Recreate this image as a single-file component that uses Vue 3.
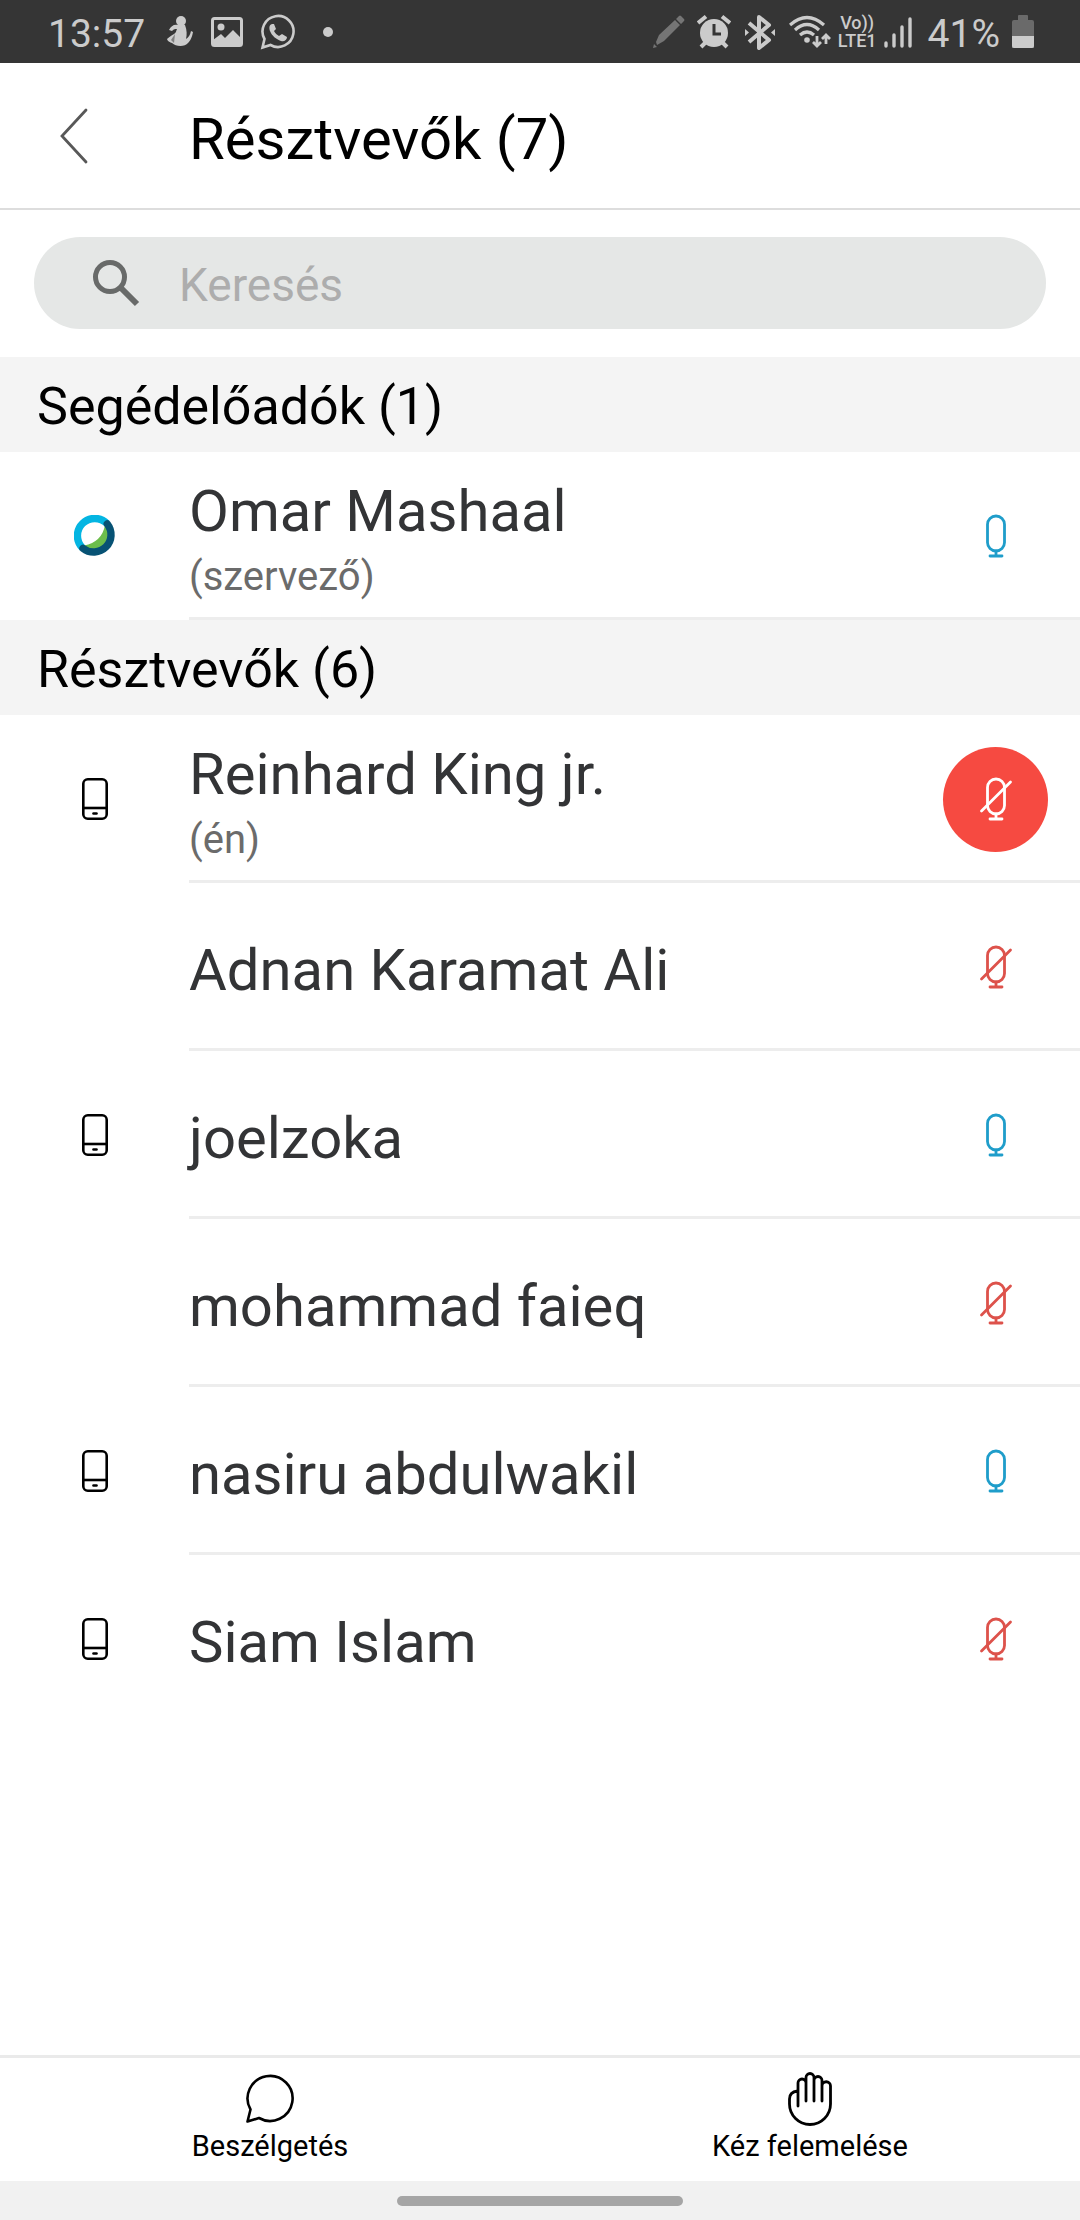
<script setup>
import { ref } from 'vue'

const query = ref('')

const groups = [
  {
    title: 'Segédelőadók (1)',
    people: [{ name: 'Omar Mashaal', role: '(szervező)', device: 'webex', mic: 'on' }],
  },
  {
    title: 'Résztvevők (6)',
    people: [
      { name: 'Reinhard King jr.', role: '(én)', device: 'phone', mic: 'self' },
      { name: 'Adnan Karamat Ali', device: '', mic: 'off' },
      { name: 'joelzoka', device: 'phone', mic: 'on' },
      { name: 'mohammad faieq', device: '', mic: 'off' },
      { name: 'nasiru abdulwakil', device: 'phone', mic: 'on' },
      { name: 'Siam Islam', device: 'phone', mic: 'off' },
    ],
  },
]
</script>

<template>
  <div class="screen">
    <div class="status">
      <div class="status-side left">
        <span class="clock">13:57</span>
        <svg width="28" height="36" viewBox="0 0 28 36" fill="#cbcbcb">
          <circle cx="15" cy="7" r="5" />
          <path d="M12 11c-4-1-7 1-9 5l3 1c2-2 3-2 5-2-1 2-1 4-3 5-3 2-5 3-7 5 1 3 3 3 5 4 4 4 13 4 16 0 2-2 4-5 5-11l-2-1c-1 4-2 6-5 8 1-4 1-9-1-14z" />
          <path d="M9 20l-4 6 3 3z" fill="#353535" opacity=".5" />
        </svg>
        <svg width="32" height="36" viewBox="0 0 32 36">
          <rect x="1.500" y="4.500" width="29" height="27" rx="2" fill="none" stroke="#cbcbcb" stroke-width="3" />
          <circle cx="10" cy="13" r="3.500" fill="#cbcbcb" />
          <path d="M2 26l8-6 4 4 8-8 9 9v7H2z" fill="#cbcbcb" />
        </svg>
        <svg width="36" height="36" viewBox="0 0 36 36">
          <path d="M2.500 33.500l2-8.500a15.500 15.500 0 1 1 6 6z" fill="none" stroke="#cbcbcb" stroke-width="2.600" />
          <path d="M12 10c-3 1-3 4-2 7 2 5 6 8 11 10 3 1 6-1 6-4l-5-3-3 2c-2-1-4-3-5-5l2-2-2-5z" fill="#cbcbcb" />
        </svg>
        <span class="dot"></span>
      </div>
      <div class="status-side right">
        <svg width="32" height="36" viewBox="0 0 32 36" fill="#757575">
          <path d="M0 34l1-4 3 3zM3 28l3-7L22 6l5 5-16 16-7 4zM23 5l3-3q1-1 2 0l3 3q1 1 0 2l-3 3z" />
        </svg>
        <svg width="34" height="36" viewBox="0 0 34 36">
          <g fill="none" stroke="#cbcbcb" stroke-width="4">
            <path d="M1 9l8-6.500M25 2.500L33 9M8 29l-4 4M26 29l4 4" />
          </g>
          <circle cx="17" cy="19" r="14" fill="#cbcbcb" />
          <path d="M17 10v10h7" fill="none" stroke="#353535" stroke-width="3" />
        </svg>
        <svg class="bluetooth" width="30" height="36" viewBox="0 0 30 36">
          <path d="M4 9l20 17-10 8V3l10 8L4 28" fill="none" stroke="#cbcbcb" stroke-width="4" stroke-linejoin="round" />
          <path d="M0 15l4 3.500-4 3.500zM30 15l-4 3.500 4 3.500z" fill="#cbcbcb" />
        </svg>
        <svg width="42" height="36" viewBox="0 0 42 36" fill="none" stroke="#cbcbcb" stroke-width="3.200">
          <path d="M1 11q17-15 34 0M6 16q12-11 24 0M11 21q7-6 14 0" />
          <circle cx="18" cy="26" r="2.800" fill="#cbcbcb" stroke="none" />
          <path d="M28 22v10M24 28l4 4 4-4M37 30V21M33 25l4-4 4 4" stroke-width="2.800" />
        </svg>
        <span class="volte"><span>Vo))</span><span>LTE1</span></span>
        <svg width="28" height="36" viewBox="0 0 28 36" stroke="#cbcbcb" stroke-width="3.400" stroke-linecap="round">
          <path d="M2 29v3M10 21v11M18 13v19M26 5v27" />
        </svg>
        <span class="percent">41%</span>
        <svg width="22" height="36" viewBox="0 0 22 36">
          <path d="M6 2q0-1 1-1h8q1 0 1 1v4h4q2 0 2 2v26H0V8q0-2 2-2h4z" fill="#6a6a6a" />
          <path d="M0 22h22v10q0 2-2 2H2q-2 0-2-2z" fill="#cbcbcb" />
        </svg>
      </div>
    </div>

    <header class="header">
      <button class="back" type="button" aria-label="Vissza">
        <svg width="28" height="56" viewBox="0 0 28 56" fill="none" stroke="#585858" stroke-width="2.800">
          <path d="M26 2L2 28l24 26" stroke-linecap="round" />
        </svg>
      </button>
      <h1>Résztvevők (7)</h1>
    </header>

    <div class="search-area">
      <label class="search">
        <svg width="48" height="48" viewBox="0 0 48 48" fill="none" stroke="#686a69">
          <circle cx="18" cy="18" r="14.500" stroke-width="5" />
          <path d="M29 29l16 16" stroke-width="6" />
        </svg>
        <input v-model="query" type="text" placeholder="Keresés" aria-label="Keresés" />
      </label>
    </div>

    <main class="list">
      <section v-for="group in groups" :key="group.title">
        <h2>{{ group.title }}</h2>
        <ul>
          <li v-for="person in group.people" :key="person.name" class="row">
            <div class="device">
              <svg v-if="person.device === 'webex'" width="42" height="42" viewBox="0 0 42 42" fill="none">
                <path d="M31 10Q28 27 10 30.500A15 15 0 0 0 34 28V12z" fill="#6cbe4b" />
                <path d="M8.500 33A17.300 17.300 0 0 1 33 8.500" stroke="#04b5e2" stroke-width="7.400" />
                <path d="M33.300 9A17.300 17.300 0 0 1 9 33.300" stroke="#075274" stroke-width="7.400" stroke-linecap="round" />
              </svg>
              <svg v-else-if="person.device === 'phone'" width="26" height="42" viewBox="0 0 26 42" fill="none" stroke="#000" stroke-width="2.600">
                <rect x="1.300" y="1.300" width="23.400" height="39.400" rx="4.500" />
                <path d="M1 30h24" />
                <path d="M11.500 35.500h3" stroke-linecap="round" />
              </svg>
            </div>
            <div class="info">
              <div class="who">
                <span class="name">{{ person.name }}</span>
                <span v-if="person.role" class="role">{{ person.role }}</span>
              </div>
              <button class="mic" :class="person.mic" type="button" aria-label="Mikrofon">
                <svg width="34" height="44" viewBox="0 0 34 44" fill="none" stroke="currentColor" stroke-width="2.800" stroke-linecap="round">
                  <rect x="8.500" y="2" width="17" height="35" rx="8.500" />
                  <path d="M17 37v5M11 42h12" />
                  <path v-if="person.mic !== 'on'" d="M2.500 34L31.500 5" />
                </svg>
              </button>
            </div>
          </li>
        </ul>
      </section>
    </main>

    <nav class="actions">
      <button type="button">
        <svg width="48" height="54" viewBox="0 0 48 54" fill="none" stroke="#000" stroke-width="2.600" stroke-linejoin="round">
          <path d="M1.500 49.500L4.500 37.500A22.500 22.500 0 1 1 13 46z" />
        </svg>
        <span>Beszélgetés</span>
      </button>
      <button type="button">
        <svg width="44" height="54" viewBox="0 0 44 54" fill="none" stroke="#000" stroke-width="2.800" stroke-linecap="round">
          <path d="M10 34V11a4 4 0 0 1 8 0M18 29V5.500a4 4 0 0 1 8 0V29M26 8.500a4 4 0 0 1 8 0V29M34 14a4 4 0 0 1 8.500 0V32A20.500 20.500 0 0 1 1.500 32V27q0-7 8-8" />
        </svg>
        <span>Kéz felemelése</span>
      </button>
    </nav>
    <div class="gesture"><span></span></div>
  </div>
</template>

<style>
html,
body {
  margin: 0;
  background: #fff;
}
</style>

<style scoped>
.screen {
  display: flex;
  flex-direction: column;
  min-height: 100vh;
  background: #fff;
  color: #000;
  font-family: Roboto, "Noto Sans", sans-serif;
}
button {
  border: 0;
  padding: 0;
  background: none;
  color: inherit;
  font: inherit;
}
svg {
  display: block;
  flex: none;
}
.status {
  display: flex;
  justify-content: space-between;
  height: 63px;
  padding: 0 46px 0 48px;
  background: #353535;
  color: #cbcbcb;
  font-size: 39px;
}
.status-side {
  display: flex;
  align-items: center;
}
.clock,
.percent {
  padding-top: 4px;
}
.left {
  gap: 17px;
}
.left .clock {
  margin-right: 4px;
}
.dot {
  width: 10px;
  height: 10px;
  margin-left: 10px;
  border-radius: 50%;
  background: #cbcbcb;
}
.right {
  gap: 12px;
}
.bluetooth {
  margin: 0 2px;
}
.volte {
  display: flex;
  flex-direction: column;
  align-items: center;
  margin: 0 -5px;
  font-size: 18px;
  font-weight: 500;
  line-height: 18px;
}
.percent {
  margin-left: 4px;
}
.header {
  display: flex;
  align-items: center;
  height: 145px;
  border-bottom: 2px solid #ddd;
}
.back {
  width: 189px;
  padding-left: 60px;
}
h1 {
  margin: 0;
  padding-top: 6px;
  font-size: 58px;
  font-weight: 400;
  line-height: 68px;
}
.search-area {
  padding: 27px 34px 28px;
}
.search {
  display: flex;
  align-items: center;
  gap: 39px;
  height: 92px;
  padding: 0 58px;
  border-radius: 46px;
  background: #e5e7e6;
}
.search input {
  flex: 1;
  min-width: 0;
  border: 0;
  padding: 4px 0 0;
  outline: 0;
  background: none;
  color: #333;
  font: 46px/60px Roboto, "Noto Sans", sans-serif;
}
.search input::placeholder {
  color: #adadad;
  opacity: 1;
}
.list {
  flex: 1;
}
h2 {
  margin: 0;
  padding: 4px 37px 0;
  background: #f4f4f4;
  font-size: 52px;
  font-weight: 400;
  line-height: 91px;
}
ul {
  margin: 0;
  padding: 0;
  list-style: none;
}
.row {
  display: flex;
  min-height: 168px;
}
.device {
  display: flex;
  flex: none;
  align-items: center;
  justify-content: center;
  width: 189px;
}
.info {
  display: flex;
  flex: 1;
  align-items: center;
  justify-content: space-between;
  min-width: 0;
  padding-right: 32px;
  box-shadow: inset 0 -3px #ededed;
}
section:last-child .row:last-child .info {
  box-shadow: none;
}
.who {
  display: flex;
  flex-direction: column;
  padding-top: 6px;
}
.name {
  color: #333436;
  font-size: 58px;
  line-height: 76px;
}
.role {
  color: #6b6b6b;
  font-size: 40px;
  line-height: 56px;
}
.mic {
  display: flex;
  flex: none;
  align-items: center;
  justify-content: center;
  width: 105px;
  height: 105px;
  border-radius: 50%;
  color: #dd524b;
}
.mic.on {
  color: #1f9dca;
}
.mic.self {
  background: #f64a41;
  color: #fff;
}
.actions {
  display: flex;
  height: 123px;
  border-top: 3px solid #eaeaea;
}
.actions button {
  display: flex;
  flex: 1;
  flex-direction: column;
  align-items: center;
  padding-top: 14px;
  font-size: 29px;
  line-height: 40px;
}
.gesture {
  display: flex;
  align-items: center;
  justify-content: center;
  height: 39px;
  background: #f1f1f1;
}
.gesture span {
  width: 286px;
  height: 10px;
  border-radius: 5px;
  background: #a5a5a5;
}
</style>
